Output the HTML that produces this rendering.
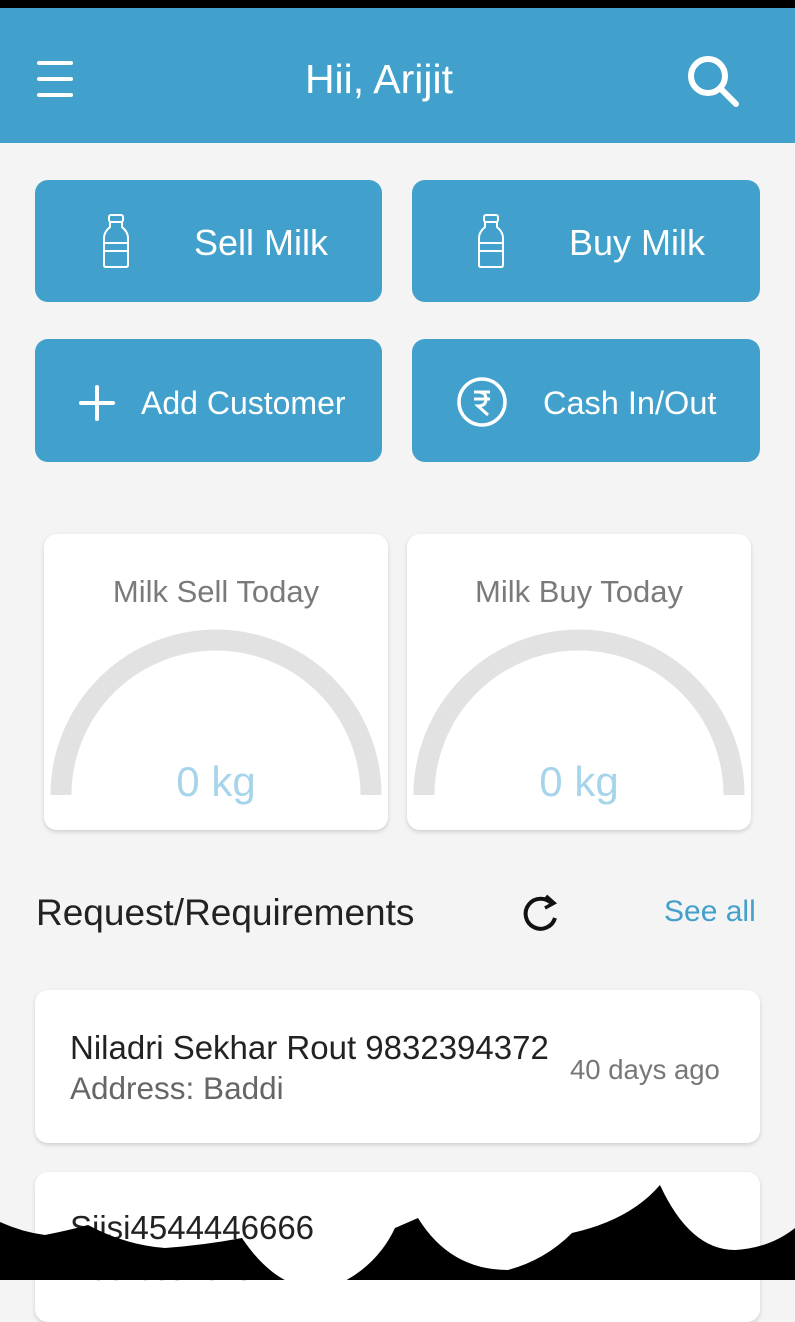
<!DOCTYPE html>
<html><head><meta charset="utf-8"><style>
*{margin:0;padding:0;box-sizing:border-box}
body{width:795px;height:1280px;overflow:hidden;background:#f4f4f4;font-family:"Liberation Sans",sans-serif;position:relative}
.abs{position:absolute;line-height:1;white-space:nowrap}
.btn{position:absolute;background:#41a1cc;border-radius:13px;color:#fff}
.card{position:absolute;background:#fff;border-radius:13px;box-shadow:0 2px 4px rgba(0,0,0,.15)}
.gt{position:absolute;width:100%;text-align:center;color:#7a7a7a;font-size:31px;line-height:1}
.kg{position:absolute;width:100%;text-align:center;color:#a6d4ea;font-size:42px;line-height:1}
</style></head><body>
<div class="abs" style="left:0;top:0;width:795px;height:8px;background:#000"></div>
<div class="abs" style="left:0;top:8px;width:795px;height:135px;background:#41a1cc"></div>
<div class="abs" style="left:37px;top:61px;width:36px;height:4px;background:#fff;border-radius:2px"></div>
<div class="abs" style="left:37px;top:77px;width:36px;height:4px;background:#fff;border-radius:2px"></div>
<div class="abs" style="left:37px;top:93px;width:36px;height:4px;background:#fff;border-radius:2px"></div>
<div class="abs" style="left:0;width:758px;top:59px;text-align:center;color:#fff;font-size:41px">Hii, Arijit</div>
<svg class="abs" style="left:684px;top:52px" width="60" height="56"><circle cx="24" cy="24" r="17" fill="none" stroke="#fff" stroke-width="6"/><line x1="36" y1="36" x2="52" y2="52" stroke="#fff" stroke-width="6" stroke-linecap="round"/></svg>

<div class="btn" style="left:35px;top:180px;width:347px;height:122px">
<svg class="abs" style="left:66px;top:33px" width="30" height="56" fill="none" stroke="#fff" stroke-width="2"><rect x="8" y="2" width="14" height="7" rx="2"/><path d="M9 9 L9 14 Q3 19 3 25 L3 52 Q3 54 5 54 L25 54 Q27 54 27 52 L27 25 Q27 19 21 14 L21 9"/><rect x="3" y="30" width="24" height="8"/></svg>
<span class="abs" style="left:159px;top:45px;font-size:36px">Sell Milk</span></div>
<div class="btn" style="left:412px;top:180px;width:348px;height:122px">
<svg class="abs" style="left:64px;top:33px" width="30" height="56" fill="none" stroke="#fff" stroke-width="2"><rect x="8" y="2" width="14" height="7" rx="2"/><path d="M9 9 L9 14 Q3 19 3 25 L3 52 Q3 54 5 54 L25 54 Q27 54 27 52 L27 25 Q27 19 21 14 L21 9"/><rect x="3" y="30" width="24" height="8"/></svg>
<span class="abs" style="left:157px;top:45px;font-size:36px">Buy Milk</span></div>
<div class="btn" style="left:35px;top:339px;width:347px;height:123px">
<svg class="abs" style="left:42px;top:44px" width="40" height="40" stroke="#fff" stroke-width="4" stroke-linecap="round"><line x1="20" y1="4" x2="20" y2="36"/><line x1="4" y1="20" x2="36" y2="20"/></svg>
<span class="abs" style="left:106px;top:48px;font-size:32px">Add Customer</span></div>
<div class="btn" style="left:412px;top:339px;width:348px;height:123px">
<svg class="abs" style="left:43px;top:36px" width="54" height="54" fill="none" stroke="#fff" stroke-width="3.5"><circle cx="27" cy="27" r="23"/><path d="M19 17 H35 M19 24 H35 M23 17 Q31 17 31 24 Q31 31 23 31 L33 40" stroke-width="3"/></svg>
<span class="abs" style="left:131px;top:48px;font-size:32.5px">Cash In/Out</span></div>

<div class="card" style="left:44px;top:534px;width:344px;height:296px">
<div class="gt" style="top:42px">Milk Sell Today</div>
<svg class="abs" style="left:0;top:0" width="344" height="296"><path d="M17 261 A155 155 0 0 1 327 261" fill="none" stroke="#e2e2e2" stroke-width="21"/></svg>
<div class="kg" style="top:227px">0 kg</div></div>
<div class="card" style="left:407px;top:534px;width:344px;height:296px">
<div class="gt" style="top:42px">Milk Buy Today</div>
<svg class="abs" style="left:0;top:0" width="344" height="296"><path d="M17 261 A155 155 0 0 1 327 261" fill="none" stroke="#e2e2e2" stroke-width="21"/></svg>
<div class="kg" style="top:227px">0 kg</div></div>

<div class="abs" style="left:36px;top:894px;font-size:37px;color:#222">Request/Requirements</div>
<svg class="abs" style="left:518px;top:890px" width="46" height="46" fill="none" stroke="#111" stroke-width="4"><path d="M34 14 A15 15 0 1 0 37 28"/><path d="M28 6 L36 13 L27 18" stroke-width="3.5"/></svg>
<div class="abs" style="left:664px;top:897px;font-size:30px;color:#43a0cc">See all</div>

<div class="card" style="left:35px;top:990px;width:725px;height:153px">
<div class="abs" style="left:35px;top:41px;font-size:33px;color:#222">Niladri Sekhar Rout 9832394372</div>
<div class="abs" style="left:35px;top:83px;font-size:31.5px;color:#666">Address: Baddi</div>
<div class="abs" style="left:535px;top:66px;font-size:27.5px;color:#777">40 days ago</div></div>
<div class="card" style="left:35px;top:1172px;width:725px;height:150px">
<div class="abs" style="left:35px;top:39px;font-size:33px;color:#222">Siisi4544446666</div>
<div class="abs" style="left:35px;top:82px;font-size:31.5px;color:#666">Address: chs</div></div>

<svg class="abs" style="left:0;top:1170px" width="795" height="110"><path d="M0 52 Q22 62 45 65 Q70 60 88 55 Q125 75 165 78 Q205 75 242 68 Q280 125 330 118 Q375 100 395 58 L418 48 Q450 100 508 100 Q545 90 572 63 Q630 50 660 15 Q690 80 735 80 Q770 78 795 58 L795 110 L0 110 Z" fill="#000"/></svg>
</body></html>
